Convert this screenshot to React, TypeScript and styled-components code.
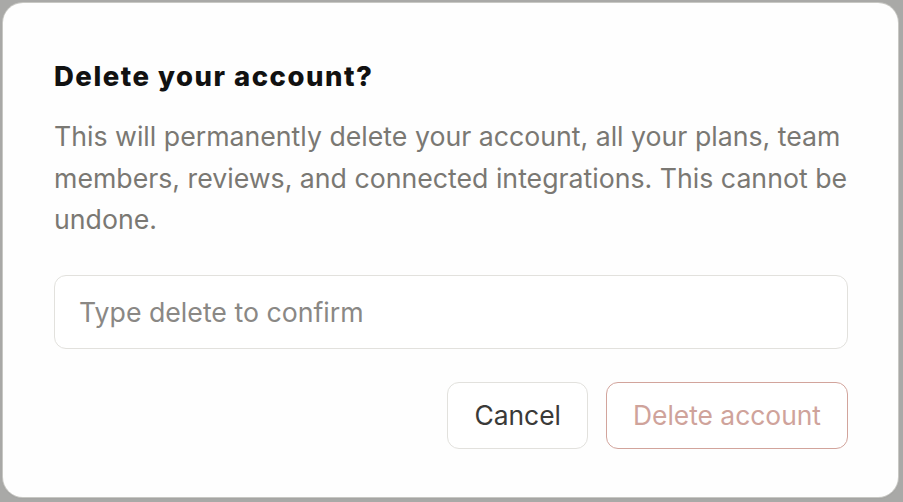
import React from "react";
import styled, { createGlobalStyle } from "styled-components";

const Global = createGlobalStyle`
  html, body { margin: 0; padding: 0; }
  body {
    background: #a9a9a7;
    font-family: Inter, "Liberation Sans", sans-serif;
    width: 903px;
    height: 502px;
    overflow: hidden;
  }
  * { box-sizing: border-box; }
`;

const Backdrop = styled.div`
  width: 903px;
  height: 502px;
  padding: 3px 5px 5px 3px;
`;

const Dialog = styled.div`
  width: 100%;
  height: 100%;
  background: #fefefe;
  border-radius: 20px;
  box-shadow: 0 0 0 1px #c8c8c4, 0 1px 2px rgba(0,0,0,0.1);
  padding: 56px 50px 0 51px;
  display: flex;
  flex-direction: column;
`;

const Title = styled.h2`
  margin: 0;
  font-size: 27.5px;
  line-height: 34px;
  font-weight: 800;
  color: #111;
  letter-spacing: 1.5px;
`;

const Body = styled.p`
  margin: 23px -12px 0 0;
  font-size: 26.7px;
  line-height: 41.5px;
  color: #7a7873;
`;

const Input = styled.input`
  margin-top: 34px;
  width: 100%;
  height: 74px;
  border: 1.5px solid #e2e1dd;
  border-radius: 12px;
  padding: 0 24px;
  font-family: inherit;
  font-size: 26.7px;
  color: #333;
  background: #fff;
  outline: none;
  &::placeholder { color: #8a8885; }
`;

const Actions = styled.div`
  margin-top: 33px;
  display: flex;
  justify-content: flex-end;
  gap: 18px;
`;

const Button = styled.button<{ $danger?: boolean }>`
  height: 67px;
  padding: 0 26px;
  border-radius: 12px;
  font-family: inherit;
  font-size: 26.4px;
  background: #fff;
  border: 1.5px solid ${(p) => (p.$danger ? "#d2a49c" : "#e2e1dd")};
  color: ${(p) => (p.$danger ? "#cfa39b" : "#3a3a38")};
  cursor: pointer;
`;

export default function App() {
  return (
    <>
      <Global />
      <Backdrop>
        <Dialog>
          <Title>Delete your account?</Title>
          <Body>
            This will permanently delete your account, all your plans, team
            members, reviews, and connected integrations. This cannot be
            undone.
          </Body>
          <Input placeholder="Type delete to confirm" />
          <Actions>
            <Button>Cancel</Button>
            <Button $danger>Delete account</Button>
          </Actions>
        </Dialog>
      </Backdrop>
    </>
  );
}
